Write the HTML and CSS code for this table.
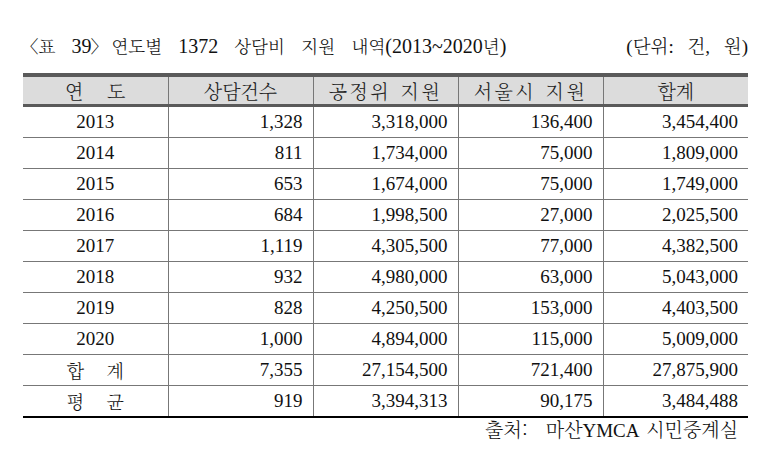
FILE: index.html
```html
<!DOCTYPE html>
<html lang="ko">
<head>
<meta charset="utf-8">
<link rel="stylesheet" href="styles.css">
</head>
<body>
<div class="page">
  <div class="caption">
    <span class="title"><span class="k bro">〈</span><span class="k">표</span> 39<span class="k brc">〉</span> <span class="k">연도별</span> 1372 <span class="k">상담비 지원 내역</span>(2013~2020<span class="k">년</span>)</span>
    <span class="unit">(<span class="k">단위</span>: <span class="k">건</span>, <span class="k">원</span>)</span>
  </div>
  <table class="data">
    <thead>
      <tr><th>연&nbsp;&nbsp;&nbsp;&nbsp;도</th><th>상담건수</th><th class="wide">공정위 지원</th><th class="wide">서울시 지원</th><th>합계</th></tr>
    </thead>
    <tbody>
      <tr><td class="c">2013</td><td>1,328</td><td>3,318,000</td><td>136,400</td><td>3,454,400</td></tr>
      <tr><td class="c">2014</td><td>811</td><td>1,734,000</td><td>75,000</td><td>1,809,000</td></tr>
      <tr><td class="c">2015</td><td>653</td><td>1,674,000</td><td>75,000</td><td>1,749,000</td></tr>
      <tr><td class="c">2016</td><td>684</td><td>1,998,500</td><td>27,000</td><td>2,025,500</td></tr>
      <tr><td class="c">2017</td><td>1,119</td><td>4,305,500</td><td>77,000</td><td>4,382,500</td></tr>
      <tr><td class="c">2018</td><td>932</td><td>4,980,000</td><td>63,000</td><td>5,043,000</td></tr>
      <tr><td class="c">2019</td><td>828</td><td>4,250,500</td><td>153,000</td><td>4,403,500</td></tr>
      <tr><td class="c">2020</td><td>1,000</td><td>4,894,000</td><td>115,000</td><td>5,009,000</td></tr>
      <tr><td class="c lbl">합&nbsp;&nbsp;&nbsp;&nbsp;계</td><td>7,355</td><td>27,154,500</td><td>721,400</td><td>27,875,900</td></tr>
      <tr class="last"><td class="c lbl">평&nbsp;&nbsp;&nbsp;&nbsp;균</td><td>919</td><td>3,394,313</td><td>90,175</td><td>3,484,488</td></tr>
    </tbody>
  </table>
  <div class="source"><span class="k colon">출처:</span> <span class="k">마산</span>YMCA <span class="k">시민중계실</span></div>
</div>
</body>
</html>
```
FILE: styles.css
```css
html, body {
  margin: 0;
  padding: 0;
  background: #ffffff;
}
body {
  font-family: "Liberation Serif", "Noto Serif CJK KR", "Noto Sans CJK KR", serif;
  color: #111111;
  font-size: 19px;
}
.k {
  font-family: "Noto Serif CJK KR", "Noto Sans CJK KR", "Liberation Serif", sans-serif;
  font-weight: 300;
}
.page {
  width: 725px;
  padding: 34px 0 0 23px;
}
.caption {
  display: flex;
  justify-content: space-between;
  align-items: center;
  height: 24px;
  line-height: 24px;
  margin-bottom: 15px;
}
.title {
  font-size: 20px;
  word-spacing: 11px;
  white-space: nowrap;
}
.title .k {
  font-size: 17.5px;
}
.title .bro {
  margin-left: -2px;
  margin-right: 0;
}
.title .brc {
  margin-left: -1px;
  margin-right: -12.5px;
}
.unit {
  font-size: 19px;
  word-spacing: 9px;
  white-space: nowrap;
}
.unit .k {
  font-size: 18.5px;
}
.data {
  width: 725px;
  border-collapse: collapse;
  table-layout: fixed;
}
.data th {
  background: #dcdcdc;
  font-family: "Noto Serif CJK KR", "Noto Sans CJK KR", sans-serif;
  font-weight: 300;
  font-size: 19px;
  height: 27px;
  padding: 0;
  line-height: 27px;
  text-align: center;
  border-top: 4px solid #5a5a5a;
  border-bottom: 3px solid #5a5a5a;
  border-left: 1px solid #777777;
  color: #222222;
}
.data th.wide {
  letter-spacing: 2.5px;
  word-spacing: 1px;
}
.data th:first-child,
.data td:first-child {
  border-left: none;
}
.data td {
  height: 30px;
  padding: 0 10px 0 0;
  line-height: 30px;
  text-align: right;
  border-left: 1px solid #777777;
  border-bottom: 1px solid #777777;
}
.data td.c {
  text-align: center;
  padding: 0;
}
.data td.lbl {
  font-family: "Noto Serif CJK KR", "Noto Sans CJK KR", sans-serif;
  font-weight: 300;
  font-size: 18px;
}
.data tr.last td {
  border-bottom: 2px solid #000000;
}
.source {
  text-align: right;
  padding-right: 10px;
  line-height: 22px;
  word-spacing: 3px;
  white-space: nowrap;
}
.source .k {
  font-size: 19px;
}
.source .colon {
  margin-right: 10px;
}
```
